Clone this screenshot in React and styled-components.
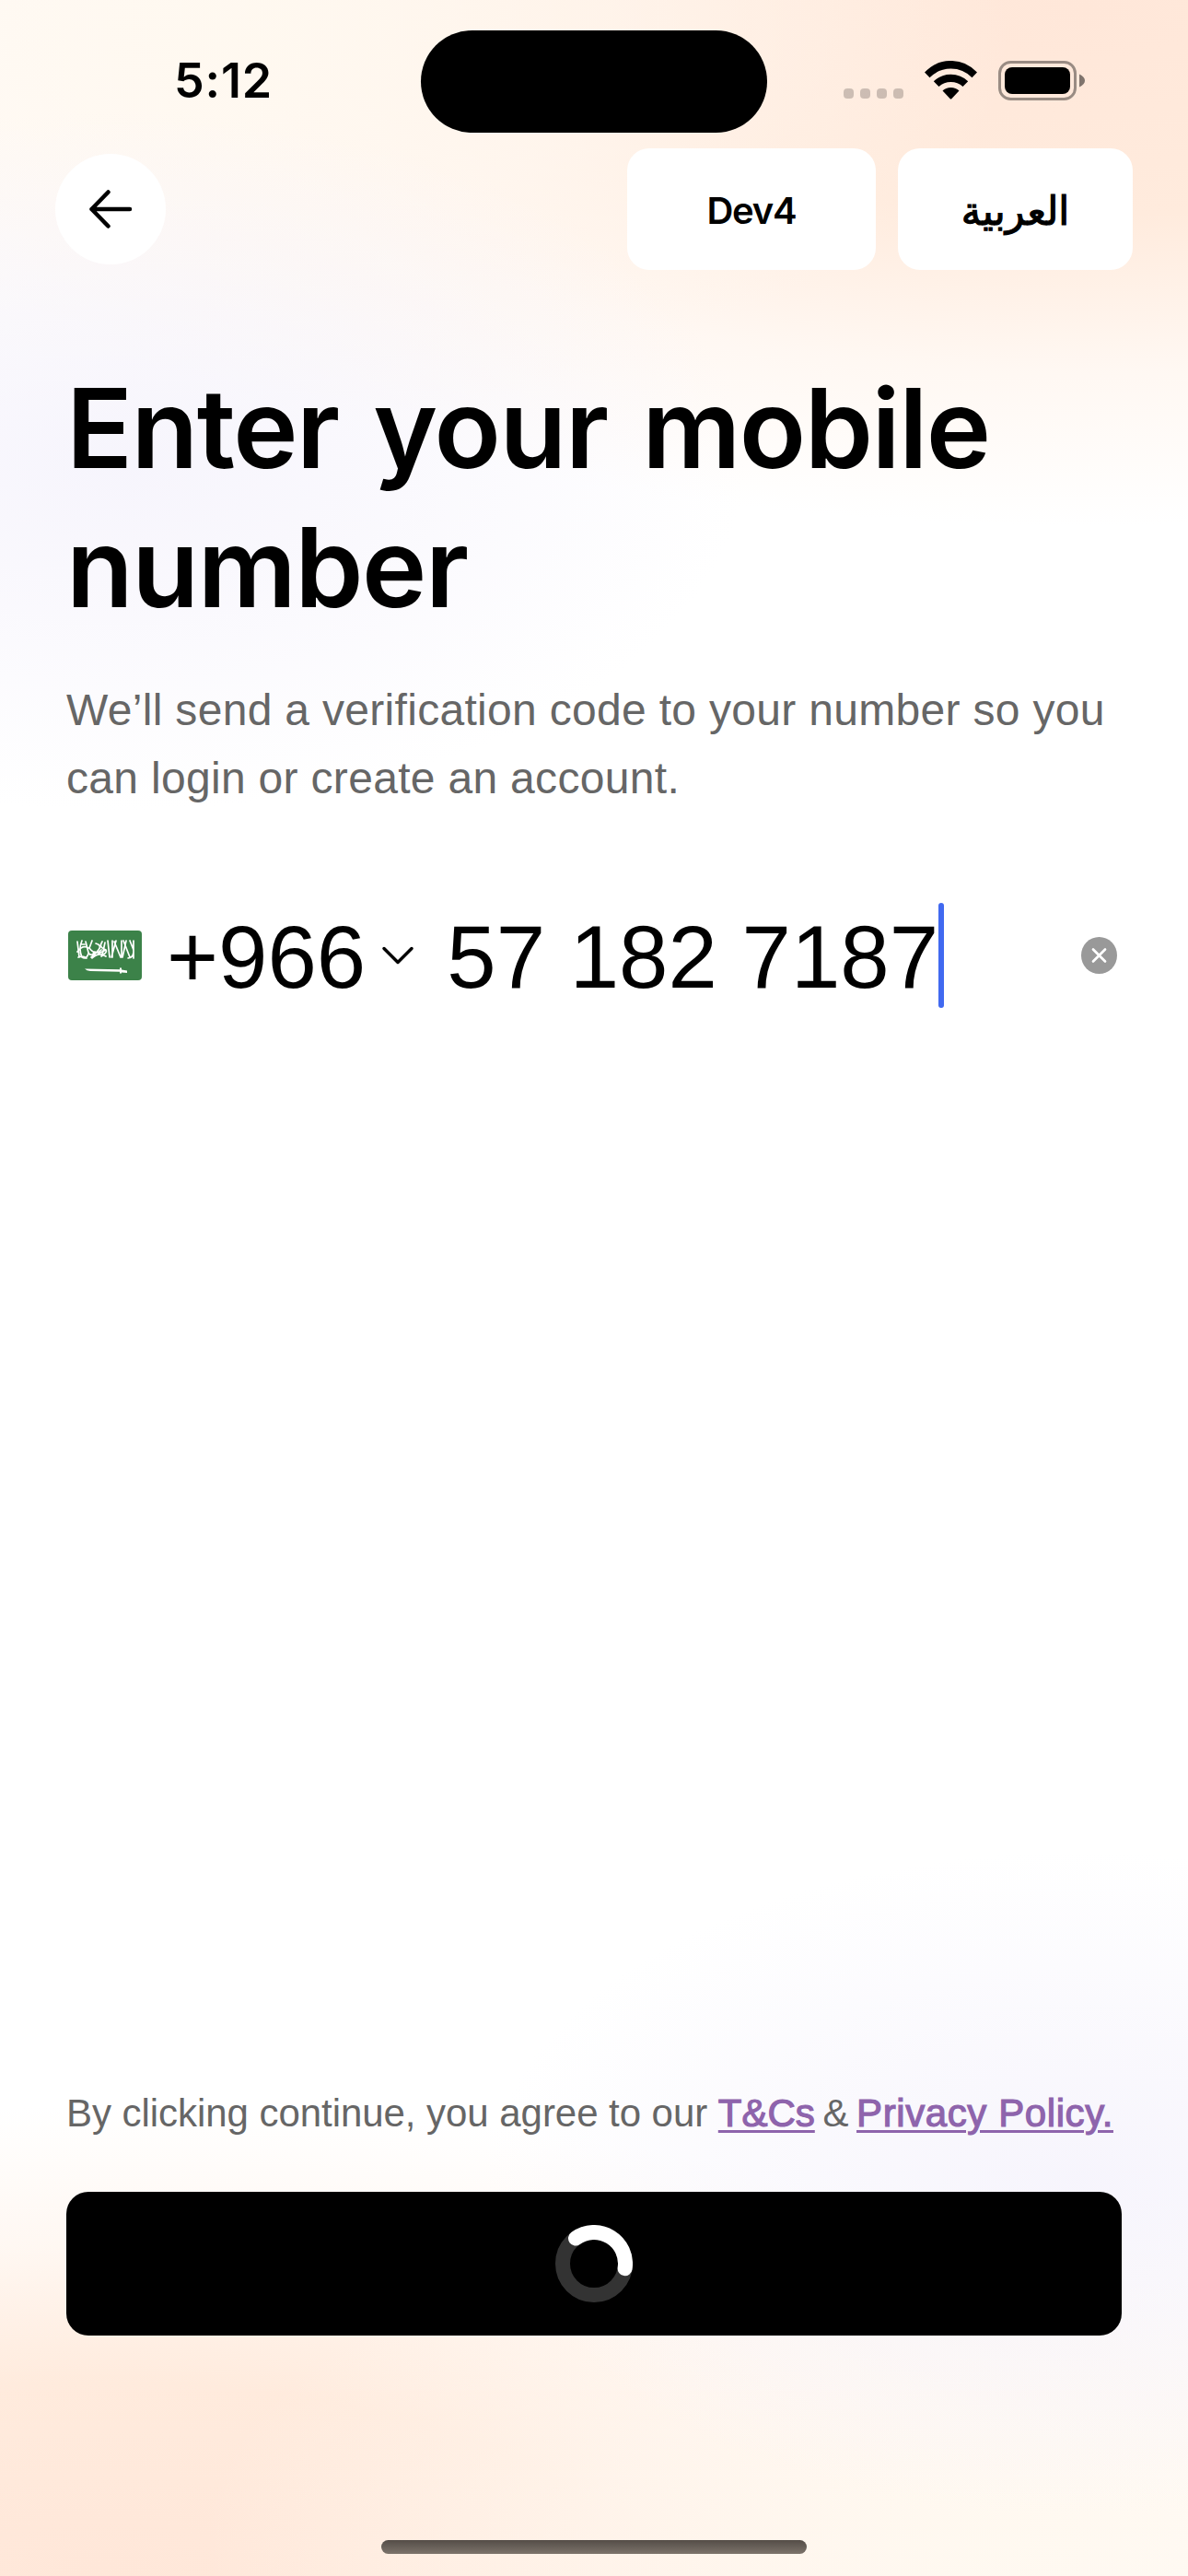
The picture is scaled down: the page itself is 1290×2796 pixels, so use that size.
import React from "react";
import styled, { createGlobalStyle } from "styled-components";

const Global = createGlobalStyle`
  * { box-sizing: border-box; }
  body { margin: 0; background: #fff; }
`;

const Screen = styled.main`
  width: 1290px;
  height: 2796px;
  overflow: hidden;
  display: flex;
  flex-direction: column;
  color: #000;
  font-family: "Liberation Sans", Arial, sans-serif;
  background:
    radial-gradient(ellipse 680px 380px at 130px 500px, rgba(245, 243, 252, 0.85), rgba(246, 244, 252, 0.55) 45%, rgba(247, 245, 252, 0)),
    radial-gradient(ellipse 860px 420px at 240px 40px, rgba(255, 249, 240, 0.9), rgba(255, 248, 241, 0.65) 50%, rgba(255, 248, 241, 0)),
    radial-gradient(ellipse 1400px 560px at 1180px 10px, #ffe7d9 0%, #ffebdd 40%, rgba(255, 243, 234, 0.6) 70%, rgba(255, 255, 255, 0) 100%),
    radial-gradient(ellipse 640px 360px at 1170px 2370px, rgba(245, 243, 252, 0.85), rgba(246, 244, 252, 0.55) 45%, rgba(247, 245, 252, 0)),
    radial-gradient(ellipse 860px 380px at 1080px 2756px, rgba(255, 249, 240, 0.9), rgba(255, 248, 241, 0.65) 50%, rgba(255, 248, 241, 0)),
    radial-gradient(ellipse 1400px 500px at 110px 2786px, #ffe7d9 0%, #ffebdd 40%, rgba(255, 243, 234, 0.6) 70%, rgba(255, 255, 255, 0) 100%),
    #fff;
`;

const StatusBar = styled.header`
  height: 161px;
  padding: 33px 112px 0 0;
  display: grid;
  grid-template-columns: 457px 376px 1fr;
`;

const Time = styled.div`
  padding: 21px 0 0 189px;
  font: 600 52px/68px Inter, sans-serif;
  letter-spacing: 0.8px;
`;

const Island = styled.div`
  height: 111px;
  border-radius: 56px;
  background: #000;
`;

const StatusIcons = styled.div`
  height: 108px;
  display: flex;
  justify-content: flex-end;
  align-items: center;
`;

const Dots = styled.div`
  display: flex;
  gap: 7px;
  margin: 29px 23px 0 0;
`;

const Dot = styled.i`
  width: 11px;
  height: 11px;
  border-radius: 4px;
  background: rgba(0, 0, 0, 0.2);
`;

const WifiSvg = styled.svg`
  width: 57px;
  height: 42px;
  margin-right: 23px;
`;

const BatterySvg = styled.svg`
  width: 94px;
  height: 43px;
`;

const Toolbar = styled.nav`
  height: 132px;
  padding: 0 60px;
  display: flex;
  align-items: center;
  gap: 24px;
`;

const BackButton = styled.button`
  width: 120px;
  height: 120px;
  margin-right: auto;
  padding: 0;
  border: 0;
  border-radius: 50%;
  background: #fff;
  display: grid;
  place-items: center;
`;

const Pill = styled.button`
  width: ${(p) => p.$width}px;
  height: 132px;
  padding: 3px 0 0;
  border: 0;
  border-radius: 24px;
  background: #fff;
  color: #000;
  font: ${(p) => p.$font};
  letter-spacing: ${(p) => p.$spacing || 0}px;
  -webkit-text-stroke: ${(p) => p.$stroke || 0}px #000;
`;

const Content = styled.section`
  flex: 1;
  padding: 97px 72px 0;
`;

const Title = styled.h1`
  margin: 0;
  font: 600 119px/151px Inter, sans-serif;
  letter-spacing: -1.5px;
  word-spacing: 9px;
  white-space: nowrap;
`;

const Subtitle = styled.p`
  margin: 42px 0 0;
  font-size: 48px;
  line-height: 74px;
  letter-spacing: 0.31px;
  color: #666;
  white-space: nowrap;
`;

const PhoneRow = styled.div`
  height: 114px;
  margin-top: 98px;
  display: flex;
  align-items: center;
`;

const Flag = styled.svg`
  width: 80px;
  height: 54px;
  margin: 0 27px 0 2px;
`;

const Code = styled.span`
  font-size: 96px;
  line-height: 114px;
  padding-top: 4px;
  white-space: pre;
`;

const Chevron = styled.svg`
  width: 38px;
  height: 22px;
  margin: 0 34px 0 16px;
`;

const Caret = styled.i`
  width: 6px;
  height: 114px;
  border-radius: 3px;
  background: #4169f0;
`;

const ClearIcon = styled.svg`
  width: 39px;
  height: 40px;
  margin: 0 5px 0 auto;
`;

const Footer = styled.footer`
  height: 530px;
  padding: 0 72px 24px;
  display: flex;
  flex-direction: column;
`;

const Terms = styled.p`
  margin: 0;
  font-size: 42px;
  line-height: 56px;
  letter-spacing: -0.05px;
  color: #666;
  white-space: nowrap;
`;

const Ampersand = styled.span`
  margin: 0 -3px;
`;

const Link = styled.a`
  color: #8e64ac;
  -webkit-text-stroke: 1.2px #8e64ac;
  letter-spacing: ${(p) => p.$spacing || 0}px;
  text-decoration: underline;
  text-decoration-thickness: 3px;
  text-underline-offset: 4px;
`;

const Continue = styled.button`
  height: 156px;
  margin-top: 57px;
  padding: 0;
  border: 0;
  border-radius: 24px;
  background: #000;
  display: grid;
  place-items: center;
`;

const HomeIndicator = styled.div`
  width: 462px;
  height: 15px;
  margin: auto auto 0;
  border-radius: 8px;
  background: linear-gradient(#544d47, #7c736b);
`;

export default function App() {
  return (
    <Screen>
      <Global />
      <StatusBar>
        <Time>5:12</Time>
        <Island />
        <StatusIcons>
          <Dots><Dot /><Dot /><Dot /><Dot /></Dots>
          <WifiSvg viewBox="0 0 57 42">
            <path d="M0 12.6Q12-.3 28.5 0Q45-.3 57 12.6L51.500 18.300Q42 8.500 28.500 8.500Q15 8.500 5.500 18.300Z" />
            <path d="M9.800 22.300Q17.500 14.700 28.500 14.700Q39.500 14.700 47.200 22.300L41.500 28Q36 23 28.500 23Q21 23 15.500 28Z" />
            <path d="M19.500 32.500Q23 29 28.500 29Q34 29 37.500 32.500L29.500 41Q28.500 42 27.500 41Z" />
          </WifiSvg>
          <BatterySvg viewBox="0 0 94 43">
            <rect x="1.500" y="1.500" width="82" height="40" rx="12" fill="none" stroke="#000" strokeOpacity=".4" strokeWidth="3" />
            <rect x="7" y="7" width="71" height="29" rx="8" />
            <path d="M88 14.500Q94 17.500 94 21.500Q94 25.500 88 28.500Z" fillOpacity=".5" />
          </BatterySvg>
        </StatusIcons>
      </StatusBar>
      <Toolbar>
        <BackButton aria-label="Back">
          <svg width="48" height="42" viewBox="0 0 48 42" fill="none" stroke="#000" strokeWidth="4.500" strokeLinecap="round" strokeLinejoin="round">
            <path d="M21.500 2.500L3.500 21L21.500 39.500M3.500 21H45" />
          </svg>
        </BackButton>
        <Pill $width={270} $spacing={-1.2} $font="600 40px/48px Inter, sans-serif">Dev4</Pill>
        <Pill $width={255} $stroke={1.2} $font='400 43px/48px "DejaVu Sans", sans-serif' lang="ar" dir="rtl">العربية</Pill>
      </Toolbar>
      <Content>
        <Title>Enter your mobile<br />number</Title>
        <Subtitle>We’ll send a verification code to your number so you<br />can login or create an account.</Subtitle>
        <PhoneRow>
          <Flag viewBox="0 0 80 54">
            <rect width="80" height="54" rx="4" fill="#3c8249" />
            <g fill="none" stroke="#fff" strokeWidth="1.700" strokeLinecap="round">
              <path d="M10 12l2 17M15 11q-4 9 0 18q5 3 7-4M19 12l3 12q3 5 7-1M10 23q6-8 12-4M26 11l-3 8q7 9 13 2M30 14q7 2 3 7t-8 8M37 12q-4 6 2 8t-3 8M43 11l2 18M40 13l-3 14M48 11v18M52 11l-5 18M50 12l7 17M58 11v18M63 11l-4 18M60 11l7 18M67 11l4 10q1 8-6 9M71 11v19M26 30q7-7 15-2M11 29q5-2 9 1M14 15h4M33 25l8-4" />
            </g>
            <path d="M18 41.500L56 42.300V40.500H58V42.500L64 43.500V46L58 45.500V46.500H56V44.700L24 44Q20 43.500 18 41.500Z" fill="#fff" />
          </Flag>
          <Code>+966</Code>
          <Chevron viewBox="0 0 38 22" fill="none" stroke="#000" strokeWidth="3.500" strokeLinecap="round" strokeLinejoin="round">
            <path d="M4 3.500L19 18.500L34 3.500" />
          </Chevron>
          <Code>57 182 7187</Code>
          <Caret />
          <ClearIcon viewBox="0 0 39 40">
            <ellipse cx="19.500" cy="20" rx="19.500" ry="20" fill="#999" />
            <path d="M13 13.500L26 26.500M26 13.500L13 26.500" stroke="#fff" strokeWidth="2.700" strokeLinecap="round" />
          </ClearIcon>
        </PhoneRow>
      </Content>
      <Footer>
        <Terms>
          By clicking continue, you agree to our <Link>T&amp;Cs</Link> <Ampersand>&amp;</Ampersand> <Link $spacing={0.6}>Privacy Policy.</Link>
        </Terms>
        <Continue aria-label="Loading">
          <svg width="84" height="84" viewBox="0 0 84 84" fill="none" strokeWidth="16">
            <circle cx="42" cy="42" r="34" stroke="#333" />
            <path d="M22 14.500A34 34 0 0 1 75.600 47.200" stroke="#fff" strokeLinecap="round" />
          </svg>
        </Continue>
        <HomeIndicator />
      </Footer>
    </Screen>
  );
}
